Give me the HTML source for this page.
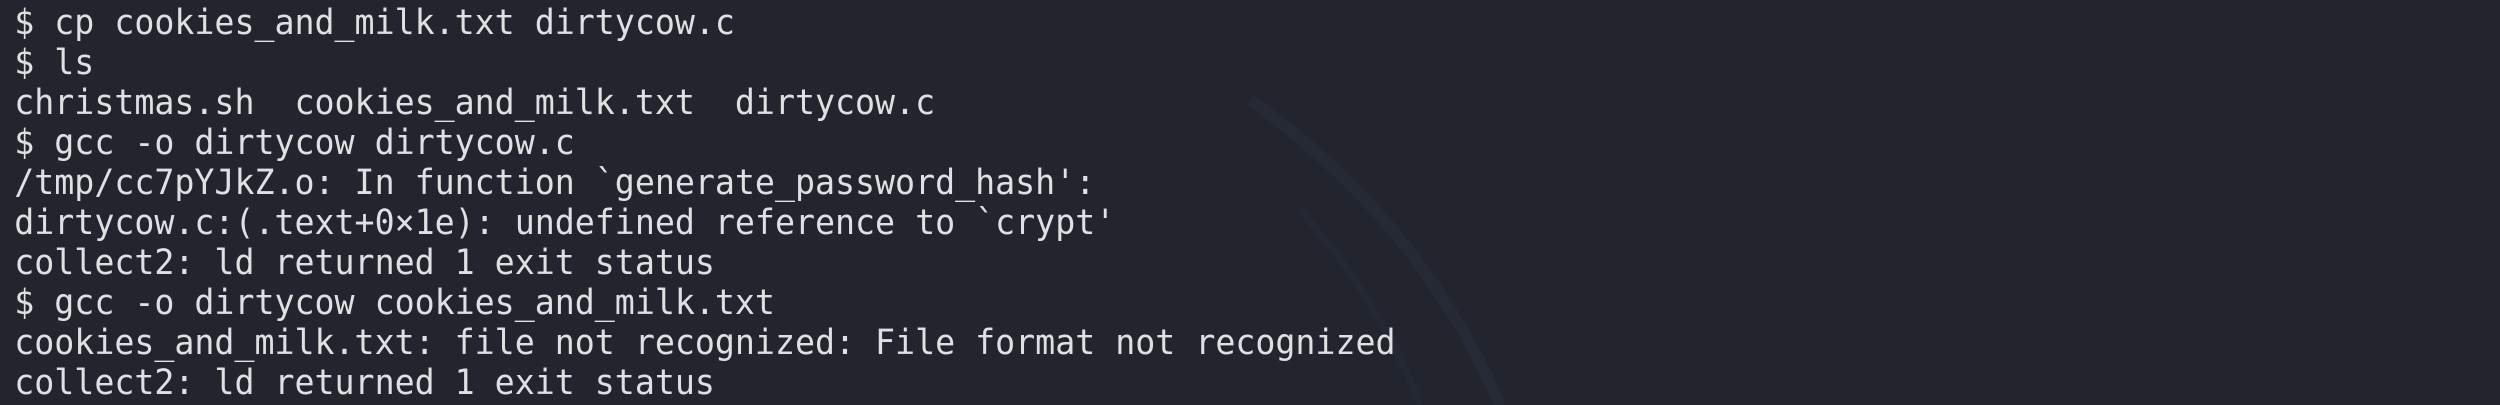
<!DOCTYPE html>
<html><head><style>
html,body{margin:0;padding:0;width:2500px;height:405px;overflow:hidden;background:#22252e;}
pre{margin:0;padding:3px 0 0 15px;font-family:"DejaVu Sans Mono","Liberation Mono",monospace;font-size:35px;line-height:40px;color:#e0e0e2;transform:scaleX(0.95);transform-origin:0 0;white-space:pre;}
svg{position:absolute;left:0;top:0}
</style></head><body>
<svg width="2500" height="405"><path d="M1250 100 Q1420 220 1500 405" stroke="#262c3a" stroke-width="12" fill="none" opacity="0.7"/><path d="M1300 210 Q1380 300 1420 405" stroke="#262c3a" stroke-width="7" fill="none" opacity="0.6"/></svg>
<pre style="position:relative">$ cp cookies_and_milk.txt dirtycow.c
$ ls
christmas.sh  cookies_and_milk.txt  dirtycow.c
$ gcc -o dirtycow dirtycow.c
/tmp/cc7pYJkZ.o: In function `generate_password_hash':
dirtycow.c:(.text+0×1e): undefined reference to `crypt'
collect2: ld returned 1 exit status
$ gcc -o dirtycow cookies_and_milk.txt
cookies_and_milk.txt: file not recognized: File format not recognized
collect2: ld returned 1 exit status</pre>
</body></html>
